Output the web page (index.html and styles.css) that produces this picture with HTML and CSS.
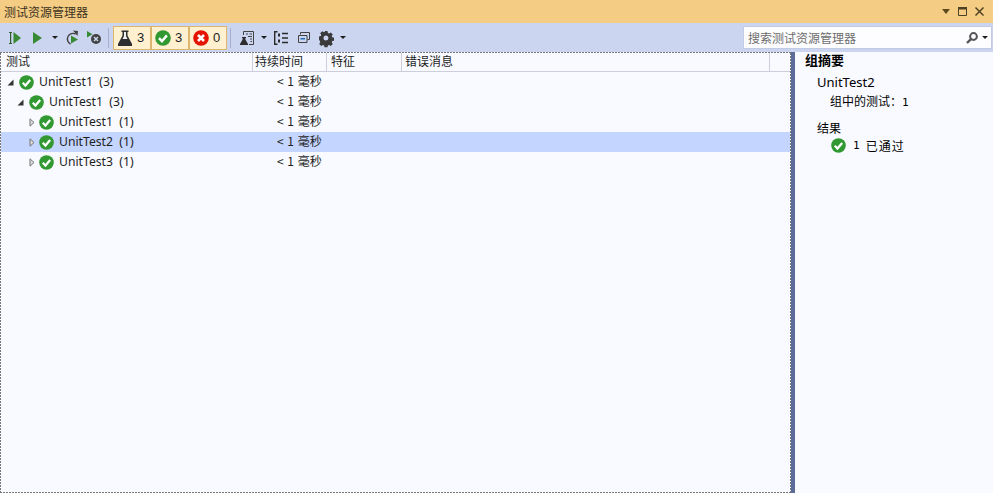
FILE: index.html
```html
<!DOCTYPE html>
<html lang="zh">
<head>
<meta charset="utf-8">
<title>测试资源管理器</title>
<link rel="stylesheet" href="styles.css">
</head>
<body>
<svg class="defs" width="0" height="0" aria-hidden="true">
  <symbol id="pass" viewBox="0 0 16 16">
    <circle cx="8" cy="8" r="7.8" fill="#329932"/>
    <path d="M4 8.200l2.900 3 5-5.800" fill="none" stroke="#fff" stroke-width="2.400"/>
  </symbol>
  <symbol id="fail" viewBox="0 0 16 16">
    <circle cx="8" cy="8" r="7.8" fill="#e51400"/>
    <path d="M5 5l6 6M11 5l-6 6" fill="none" stroke="#fff" stroke-width="2.600"/>
  </symbol>
  <symbol id="flask" viewBox="0 0 16 16">
    <path d="M4.500 .5h7v1.500h-1v3.500L15 14v2H1v-2l4.500-8.500V2h-1z" fill="#2e2e30"/>
    <path d="M7 2h2v4l1.500 3h-5L7 6z" fill="#f0eff1"/>
  </symbol>
  <symbol id="caret" viewBox="0 0 6 3">
    <path d="M0 0h6L3 3z" fill="#1e1e1e"/>
  </symbol>
  <symbol id="open" viewBox="0 0 7 7">
    <path d="M6.500 0.500v6h-6z" fill="#333"/>
  </symbol>
  <symbol id="closed" viewBox="0 0 6 9">
    <path d="M1 .8v7.400L5 4.500z" fill="#ddd" stroke="#777"/>
  </symbol>
</svg>

<div class="window">
  <header class="titlebar">
    <span class="title">测试资源管理器</span>
    <div class="win-buttons">
      <svg width="8" height="5" viewBox="0 0 8 5"><path d="M0 0h8L4 5z" fill="#5c4a1e"/></svg>
      <svg width="9" height="9" viewBox="0 0 9 9"><path d="M.5 .5h8v8h-8z" fill="none" stroke="#4d4124"/><path d="M0 0h9v2.500H0z" fill="#4d4124"/></svg>
      <svg width="9" height="9" viewBox="0 0 9 9"><path d="M.5 .5l8 8M8.500 .5l-8 8" stroke="#4d4124" stroke-width="1.500"/></svg>
    </div>
  </header>

  <div class="toolbar">
    <div class="tools">
      <svg class="t-runall" width="12" height="12" viewBox="0 0 12 12"><path d="M0 0h3v1H2.200v10H3v1H0v-1h1V1H0z" fill="#2f5f2f"/><path d="M4.500 0L12 6l-7.500 6z" fill="#388a34"/></svg>
      <svg class="t-run" width="9" height="12" viewBox="0 0 9 12"><path d="M0 0l9 6-9 6z" fill="#388a34"/></svg>
      <svg class="t-caret" width="6" height="3"><use href="#caret"/></svg>
      <svg class="t-repeat" width="14" height="15" viewBox="0 0 14 15"><path d="M10.500 4A5.500 5.500 0 1 0 5.500 14" fill="none" stroke="#424242" stroke-width="1.400"/><path d="M8 .5l5 .5-.5 5z" fill="#424242"/><path d="M6 5.500l7 4-7 4z" fill="#388a34"/></svg>
      <svg class="t-debugfail" width="14" height="13" viewBox="0 0 14 13"><path d="M0 0l5.500 3.300L0 6.500z" fill="#388a34"/><circle cx="9" cy="8" r="5" fill="#424242"/><path d="M7 6l4 4M11 6l-4 4" stroke="#ccd5f0" stroke-width="1.500"/></svg>
    </div>
    <span class="sep"></span>
    <div class="filters">
      <span class="filter"><svg width="16" height="16"><use href="#flask"/></svg><span class="num">3</span></span>
      <span class="filter"><svg width="16" height="16"><use href="#pass"/></svg><span class="num">3</span></span>
      <span class="filter"><svg width="16" height="16"><use href="#fail"/></svg><span class="num">0</span></span>
    </div>
    <span class="sep"></span>
    <div class="tools">
      <svg class="t-playlist" width="14" height="14" viewBox="0 0 14 14"><path d="M3.500 4V.5h10v13H9" fill="none" stroke="#424242"/><path d="M6 3h2M9.500 3h2.500M8 5.500h4M10 8h2M10.500 10.500h1.500" stroke="#424242"/><path d="M2 6h4v1h-.6v1.500L8 13v1H0v-1l2.600-4.500V7H2z" fill="#2e2e30"/></svg>
      <svg class="t-caret t-caret-a" width="6" height="3"><use href="#caret"/></svg>
      <svg class="t-group" width="14" height="14" viewBox="0 0 14 14"><path d="M3.500 .7H.7v12.600h2.800" fill="none" stroke="#2b2b2b" stroke-width="1.400"/><path d="M4 2.500h2v3H4zM4 8.500h2v3H4z" fill="#2b2b2b"/><path d="M8 2.500h6M8 7h6M8 11.500h6" stroke="#2b2b2b" stroke-width="1.400"/></svg>
      <svg class="t-copy" width="12" height="11" viewBox="0 0 12 11"><path d="M2.500 2.500V.5h9v7H9.500" fill="none" stroke="#424242"/><path d="M.5 3.500h8.500v7H.5z" fill="none" stroke="#424242"/><path d="M2.500 6h4.500v1.500H2.500z" fill="#1f6fb5"/></svg>
      <svg class="t-gear" width="14" height="14" viewBox="0 0 14 14"><path fill="#3a3a3a" fill-rule="evenodd" d="M5.500 0h3l.4 2 1.200.5 1.700-1.100 2 2-1.100 1.700.5 1.200 1.800.4v3l-1.800.4-.5 1.200 1.100 1.700-2 2-1.700-1.100-1.200.5-.4 1.800h-3l-.4-1.800-1.200-.5-1.700 1.100-2-2 1.100-1.700-.5-1.200L0 8.500v-3l1.800-.4.5-1.200-1.100-1.700 2-2 1.700 1.100 1.200-.5zM7 4.500a2.500 2.500 0 1 0 0 5 2.500 2.500 0 0 0 0-5z"/></svg>
      <svg class="t-caret t-caret-b" width="6" height="3"><use href="#caret"/></svg>
    </div>
    <div class="search">
      <span class="search-text">搜索测试资源管理器</span>
      <svg width="12" height="12" viewBox="0 0 12 12"><circle cx="7.500" cy="4.500" r="3.400" fill="none" stroke="#555" stroke-width="2"/><path d="M5.200 6.800L1 11" stroke="#555" stroke-width="2.400"/></svg>
      <svg class="search-caret" width="6" height="3"><use href="#caret"/></svg>
    </div>
  </div>

  <div class="content">
    <section class="tests">
      <div class="head">
        <span class="col c-name">测试</span>
        <span class="col c-dur">持续时间</span>
        <span class="col c-trait">特征</span>
        <span class="col c-err">错误消息</span>
        <span class="col c-end"></span>
      </div>
      <div class="row lv0">
        <svg class="tw" width="7" height="7"><use href="#open"/></svg>
        <svg class="ic" width="15" height="15"><use href="#pass"/></svg>
        <span class="name">UnitTest1&nbsp; (3)</span>
        <span class="dur">&lt; 1 毫秒</span>
      </div>
      <div class="row lv1">
        <svg class="tw" width="7" height="7"><use href="#open"/></svg>
        <svg class="ic" width="15" height="15"><use href="#pass"/></svg>
        <span class="name">UnitTest1&nbsp; (3)</span>
        <span class="dur">&lt; 1 毫秒</span>
      </div>
      <div class="row lv2">
        <svg class="tw" width="6" height="9"><use href="#closed"/></svg>
        <svg class="ic" width="15" height="15"><use href="#pass"/></svg>
        <span class="name">UnitTest1&nbsp; (1)</span>
        <span class="dur">&lt; 1 毫秒</span>
      </div>
      <div class="row lv2 selected">
        <svg class="tw" width="6" height="9"><use href="#closed"/></svg>
        <svg class="ic" width="15" height="15"><use href="#pass"/></svg>
        <span class="name">UnitTest2&nbsp; (1)</span>
        <span class="dur">&lt; 1 毫秒</span>
      </div>
      <div class="row lv2">
        <svg class="tw" width="6" height="9"><use href="#closed"/></svg>
        <svg class="ic" width="15" height="15"><use href="#pass"/></svg>
        <span class="name">UnitTest3&nbsp; (1)</span>
        <span class="dur">&lt; 1 毫秒</span>
      </div>
    </section>
    <div class="splitter"></div>
    <aside class="summary">
      <h2 class="sum-title">组摘要</h2>
      <div class="sum-name">UnitTest2</div>
      <div class="sum-count">组中的测试：<span class="mono">1</span></div>
      <div class="sum-result">结果</div>
      <div class="sum-pass">
        <svg width="15" height="15"><use href="#pass"/></svg>
        <span class="mono">1</span>
        <span class="sum-label">已通过</span>
      </div>
    </aside>
  </div>
</div>
</body>
</html>
```

FILE: styles.css
```css
* { box-sizing: border-box; }
html, body { margin: 0; padding: 0; }
body {
  width: 993px;
  height: 493px;
  overflow: hidden;
  background: #f9faff;
  color: #1e1e1e;
  font: 12px "Noto Sans CJK SC", "Liberation Sans", sans-serif;
}
.defs { position: absolute; }
svg { display: block; flex: none; overflow: visible; }
.window { display: flex; flex-direction: column; height: 493px; }

.titlebar {
  height: 23px;
  background: #f5cc84;
  display: flex;
  align-items: center;
  justify-content: space-between;
  padding: 0 9px 0 4px;
  flex: none;
}
.title { color: #3c3320; font-size: 12px; line-height: 23px; }
.win-buttons { display: flex; align-items: center; gap: 8px; }

.toolbar {
  height: 29px;
  background: #ccd5f0;
  display: flex;
  align-items: center;
  flex: none;
  padding-left: 9px;
}
.tools { display: flex; align-items: center; }
.t-run { margin-left: 12px; }
.t-caret { margin-left: 10px; }
.t-repeat { margin-left: 7px; }
.t-debugfail { margin-left: 8px; }
.sep { width: 1px; height: 20px; background: #a4afcf; }
.toolbar > .sep:nth-of-type(1) { margin: 0 4px 0 7px; }
.toolbar > .sep:nth-of-type(2) { margin: 0 9px 0 3px; }
.filters { display: flex; }
.filter {
  width: 38px;
  height: 24px;
  background: #fff0d0;
  border: 1px solid #dcb56e;
  display: flex;
  align-items: center;
  padding-left: 3px;
  gap: 4px;
  font: 13px "Liberation Sans", sans-serif;
  color: #1e1e1e;
}
.t-caret-a { margin-left: 7px; }
.t-group { margin-left: 7px; }
.t-copy { margin-left: 10px; }
.t-gear { margin-left: 9px; }
.t-caret-b { margin-left: 7px; }

.search {
  margin-left: auto;
  margin-right: 1px;
  width: 249px;
  height: 23px;
  background: #fdfdff;
  border: 1px solid #c2cbe5;
  display: flex;
  align-items: center;
  padding: 0 3px 0 4px;
  color: #6d6d6d;
  font-size: 12px;
}
.search-text { flex: 1; }
.search-caret { margin-left: 4px; }

.content {
  flex: 1;
  display: flex;
  min-height: 0;
}
.tests {
  width: 791px;
  padding: 1px;
  background:
    repeating-linear-gradient(90deg, #777 0 2px, transparent 2px 3px) top / 100% 1px no-repeat,
    repeating-linear-gradient(90deg, #777 0 2px, transparent 2px 3px) bottom / 100% 1px no-repeat,
    repeating-linear-gradient(0deg, #777 0 2px, transparent 2px 3px) left / 1px 100% no-repeat,
    repeating-linear-gradient(0deg, #777 0 2px, transparent 2px 3px) right / 1px 100% no-repeat,
    #f9faff;
}
.head {
  height: 19px;
  display: flex;
  background: #f9faff;
  border-bottom: 1px solid #ccceDB;
  line-height: 16px;
  font-size: 12px;
  color: #1e1e1e;
}
.col { border-right: 1px solid #ccceDB; height: 18px; }
.c-name { width: 252px; padding-left: 5px; }
.c-dur { width: 74px; padding-left: 2px; }
.c-trait { width: 75px; padding-left: 4px; }
.c-err { width: 368px; padding-left: 3px; }
.c-end { flex: 1; border-right: 0; }

.row {
  height: 20px;
  display: flex;
  align-items: center;
  position: relative;
  font: 13px "Noto Sans", "Liberation Sans", sans-serif;
}
.row.selected { background: #c4d5ff; }
.lv0 { padding-left: 6px; }
.lv1 { padding-left: 16px; }
.lv2 { padding-left: 28px; }
.lv2 .ic { margin-left: 4px; }
.ic { margin-left: 5px; }
.name { margin: 0 0 2px 5px; font-size: 12.200px; color: #1e1e1e; }
.dur {
  position: absolute;
  left: 276px;
  top: 0;
  font: 12px/18px "Noto Sans CJK SC", sans-serif;
  word-spacing: 1px;
}

.splitter { width: 4px; background: #5d6b99; flex: none; }

.summary {
  flex: 1;
  padding: 0 0 0 10px;
  background: #f9faff;
}
.sum-title { margin: 0; font-size: 13px; font-weight: 700; line-height: 16px; color: #000; }
.sum-name { margin: 5px 0 0 12px; font: 13px/18px "Noto Sans", sans-serif; color: #000; }
.sum-count { margin: 1px 0 0 25px; font-size: 12px; line-height: 18px; color: #000; }
.sum-result { margin: 9px 0 0 12px; font-size: 12px; line-height: 18px; color: #000; }
.sum-pass {
  margin: -1px 0 0 26px;
  display: flex;
  align-items: center;
  height: 18px;
  font-size: 12px;
  color: #000;
}
.mono { font: 11px "DejaVu Sans Mono", monospace; }
.sum-pass .mono { margin-left: 7px; }
.sum-label { margin-left: 6px; letter-spacing: 1px; }
```
